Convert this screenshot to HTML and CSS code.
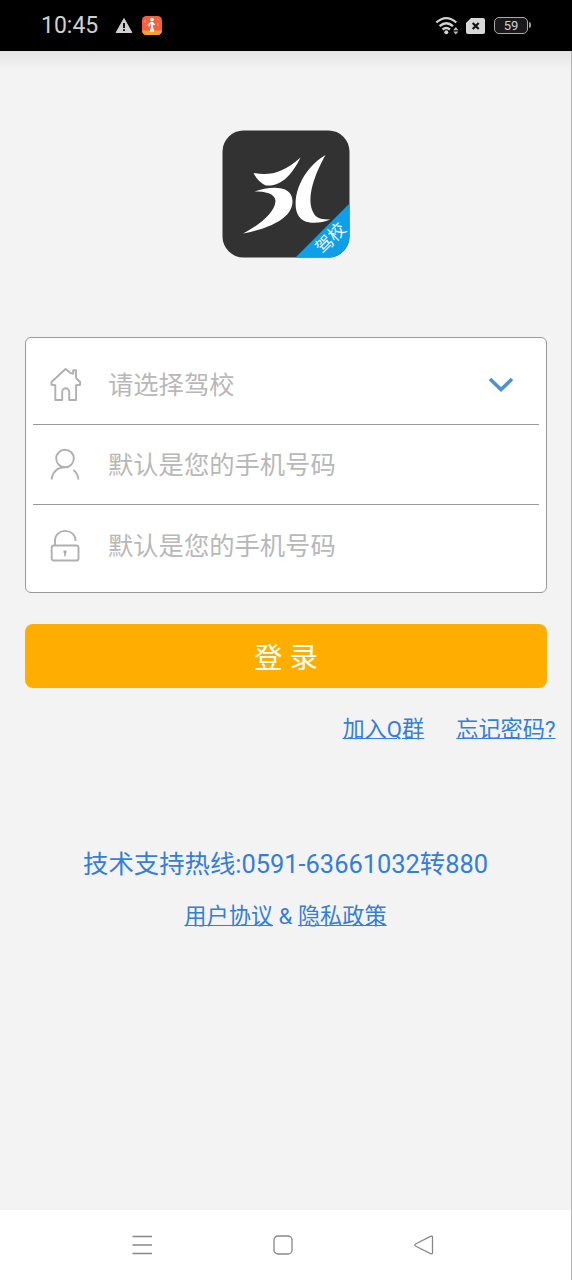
FILE: index.html
```html
<!DOCTYPE html>
<html lang="zh-CN">
<head>
<meta charset="utf-8">
<title>驾校登录</title>
<link rel="stylesheet" href="styles.css">
</head>
<body>
<header class="status">
  <span class="clock">10:45</span>
  <svg class="warn" width="18" height="17" viewBox="0 0 18 17"><path d="M9 1.5 16.8 15.5H1.2Z" fill="#d0d0d0" stroke="#d0d0d0" stroke-linejoin="round"/><path d="M9 6v5M9 12.3v1.8" stroke="#111" stroke-width="2"/></svg>
  <svg class="app-badge" width="20" height="19" viewBox="0 0 20 19"><defs><clipPath id="badge"><rect width="20" height="19" rx="4.5"/></clipPath></defs><g clip-path="url(#badge)"><path fill="#f4603f" d="M0 0h20v19H0z"/><path fill="#f7a12c" d="M0 14.5h20V19H0z"/><path d="M3 4v3M16 7v3M4 10l2-2M15 3l2 1" stroke="#f99a78"/></g><circle cx="10" cy="3.6" r="1.8" fill="#fff"/><path d="M10 6v5M9.7 6.5 7.3 8v2.5M10.3 6.5 12.500 9M10 10.500l-1.500 5.500M10 10.500l1.500 5.500" fill="none" stroke="#fff" stroke-width="1.700"/></svg>
  <svg class="wifi" width="26" height="20" viewBox="0 0 26 20"><g fill="none" stroke="#d4d4d4" stroke-width="2.3"><path d="M1.300 6.500Q11.300-2.300 21.300 6.500M4.600 10.200Q11.300 4.200 18 10.200M7.600 13.500Q11.300 10.400 15 13.500"/></g><circle cx="11.300" cy="16.200" r="2" fill="#d4d4d4"/><path d="M18.200 14.200 20.800 11l2.600 3.200zM18.200 15.600h5.200l-2.600 3z" fill="#bbb"/></svg>
  <svg class="sim" width="19" height="16" viewBox="0 0 19 16"><path d="M5 0h12a2 2 0 0 1 2 2v12a2 2 0 0 1-2 2H2a2 2 0 0 1-2-2V5Z" fill="#d8d8d8"/><path d="m6.700 5 6 6m0-6-6 6" stroke="#111" stroke-width="2.200"/></svg>
  <div class="battery">59</div>
</header>
<main class="page">
  <svg class="logo" width="128" height="128" viewBox="0 0 128 128">
    <defs><clipPath id="tile"><rect x=".5" y=".5" width="127" height="127" rx="21"/></clipPath></defs>
    <g clip-path="url(#tile)"><path fill="#323232" d="M0 0h128v128H0z"/><path fill="#0f9fe8" d="M128 73v55H73Z"/></g>
    <g fill="#fff"><path d="M31.500 43C48 46 61 43 78.500 27.500C71 43 60 57 44 55.500Q36 52 31.500 43Z"/><path d="M32.500 61.500C49 56 70 55 70.500 71C71 89 45 99 21 103.500C36 96 53 83 53.500 71C53 63 43 61.500 32.500 61.500Z"/><path d="M103.500 25C93 44 84 67 91 82C94 89 101 89.500 108.500 89.500C94 95 80 94 75.500 84C69 67 80 39 103.500 25Z"/></g>
    <text class="logo-label" transform="translate(108.500 108) rotate(-45)" text-anchor="middle" y="6.500">驾校</text>
  </svg>
  <form class="card">
    <div class="row">
      <svg class="icon" width="32" height="34" viewBox="0 0 32 34"><path d="M15.500 1.500 1.500 14.500v2.700l3.800.6v14.700h6.900v-8.200a3.500 3.500 0 0 1 7 0v8.200h6.900V17.800l4-.6v-2.700L26 10.300V2.700h-2.800v3.600l-3-1Z" transform="translate(0 -.5)"/></svg>
      <span class="hint">请选择驾校</span>
      <svg class="arrow" width="26" height="18" viewBox="0 0 26 18"><path d="m2 3 11 10.500L24 3" fill="none" stroke="#4d91d5" stroke-width="3.600"/></svg>
    </div>
    <div class="row">
      <svg class="icon" width="32" height="34" viewBox="0 0 32 34"><circle cx="15" cy="10.500" r="8.800"/><path d="M1.700 31.500c.3-7 5.700-12.200 13.300-12.200M23.500 22q4.300 3.500 5 9.500"/></svg>
      <span class="hint">默认是您的手机号码</span>
    </div>
    <div class="row">
      <svg class="icon" width="32" height="34" viewBox="0 0 32 34"><rect x="1.700" y="16.500" width="26.800" height="15" rx="2"/><path d="M5 16.500V12c0-13.500 20.500-13.500 20.500 0"/><path d="M13.500 21.500h3v2l-.7 1v2.700h-1.600v-2.700l-.7-1z" fill="#aaa" stroke="none"/></svg>
      <span class="hint">默认是您的手机号码</span>
    </div>
  </form>
  <button class="login">登 录</button>
  <nav class="links"><a>加入Q群</a><a>忘记密码?</a></nav>
  <p class="hotline">技术支持热线:0591-63661032转880</p>
  <p class="legal"><a>用户协议</a> &amp; <a>隐私政策</a></p>
</main>
<footer class="navbar">
  <svg width="20" height="20" viewBox="0 0 20 20"><path d="M.5 1.500h19.500M.5 10h19.500M.5 18.500h19.500"/></svg>
  <svg width="20" height="20" viewBox="0 0 20 20"><rect x="1" y="1" width="18" height="18" rx="4"/></svg>
  <svg width="20" height="20" viewBox="0 0 20 20"><path d="M1.500 9 16.500 1.300q2-.8 2 1v15.400q0 1.800-2 1L1.500 11q-1.500-1 0-2Z"/></svg>
</footer>
</body>
</html>
```
FILE: styles.css
```css
* { box-sizing: border-box; }
body {
  margin: 0;
  width: 572px;
  height: 1280px;
  display: flex;
  flex-direction: column;
  background: #f3f3f3;
  font-family: Roboto, "Noto Sans CJK SC", sans-serif;
}
.status {
  height: 51px;
  flex: none;
  display: flex;
  align-items: center;
  padding: 0 44px 0 41px;
  background: #000;
  color: #d0d0d0;
}
.clock { width: 74px; font-size: 23px; }
.app-badge { margin-left: 9px; }
.wifi { margin-left: auto; }
.sim { margin-left: 5px; }
.battery {
  position: relative;
  width: 34px;
  height: 17px;
  margin-left: 9px;
  border: 1.500px solid #aaa;
  border-radius: 5px;
  background: #191919;
  font-size: 13px;
  line-height: 16px;
  text-align: center;
}
.battery::after {
  content: "";
  position: absolute;
  right: -4px;
  top: 4px;
  width: 2px;
  height: 6px;
  border-radius: 0 2px 2px 0;
  background: #999;
}
.page {
  flex: 1;
  display: flex;
  flex-direction: column;
  align-items: center;
  padding-top: 79px;
  border-right: 1px solid #b5b5b5;
  background: linear-gradient(#e4e4e4, #f3f3f3 18px);
}
.logo { flex: none; }
.logo-label { font: 17.500px "Noto Sans CJK SC", sans-serif; fill: #e8f7ff; }
.card {
  width: 522px;
  height: 256px;
  margin-top: 79px;
  padding: 6px 7px 0 7px;
  border: 1.500px solid #999;
  border-radius: 6px;
  background: #fff;
}
.row {
  height: 80px;
  display: flex;
  align-items: center;
  padding: 1px 25px 0 17px;
  border-bottom: 1px solid #999;
}
.row:first-child { height: 81px; padding-top: 2px; }
.row:last-child { border-bottom: 0; }
.icon { fill: none; stroke: #b0b0b0; stroke-width: 1.900; stroke-linejoin: round; }
.hint { margin-left: 26.500px; padding-top: 2px; font-size: 25.300px; line-height: 36px; color: #b8b8b8; }
.arrow { margin-left: auto; }
.login {
  width: 522px;
  height: 64px;
  margin-top: 31px;
  padding: 0 0 1px 1px;
  border: 0;
  border-radius: 8px;
  background: #ffae00;
  color: #fff;
  font: 28.500px Roboto, "Noto Sans CJK SC", sans-serif;
}
.links {
  width: 100%;
  margin-top: 24px;
  padding-right: 15.500px;
  display: flex;
  justify-content: flex-end;
  gap: 32px;
  font-size: 22.200px;
  line-height: 34px;
}
a { text-decoration: underline; text-decoration-thickness: 1px; }
.links, .hotline, .legal { color: #347edb; }
.hotline { margin: 98px 0 0; font-size: 25.400px; line-height: 40px; }
.legal { margin: 15px 0 0; font-size: 22.200px; line-height: 34px; }
.navbar {
  height: 70px;
  flex: none;
  display: flex;
  justify-content: space-between;
  align-items: center;
  padding: 0 137px 0 132px;
  border-right: 1px solid #b5b5b5;
  background: #fff;
}
.navbar svg { fill: none; stroke: #888; stroke-width: 1.300; }
```
